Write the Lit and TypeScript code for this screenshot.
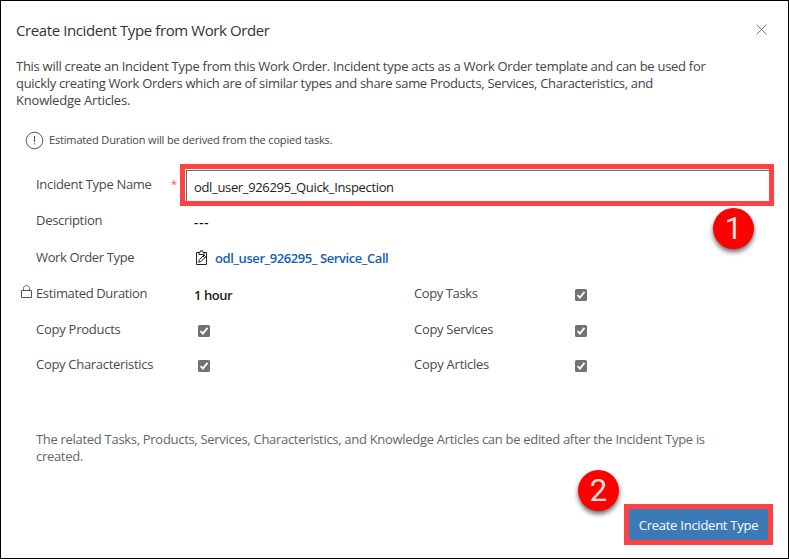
import { LitElement, html, css } from "lit";
import { customElement, property } from "lit/decorators.js";

@customElement("check-box")
class CheckBox extends LitElement {
  static styles = css`
    :host { display: block; width: 12px; height: 12px; }
    svg { display: block; }
  `;
  render() {
    return html`<svg width="12" height="12" viewBox="0 0 12 12">
      <rect width="12" height="12" rx="1.5" fill="#727272" />
      <path d="M2.5 6.2 L4.9 8.6 L9.5 2.9" fill="none" stroke="#fff" stroke-width="1.8" />
    </svg>`;
  }
}

@customElement("step-badge")
class StepBadge extends LitElement {
  @property() n = "";
  static styles = css`
    :host {
      display: block; width: 41px; height: 41px; border-radius: 50%;
      background: #fe0000; color: #e0e0e0; text-align: center;
      font: 31px/42px Roboto, Arial, sans-serif;
      box-shadow: 0 3px 5px rgba(0, 0, 0, 0.6);
    }
  `;
  render() {
    return html`${this.n}`;
  }
}

@customElement("app-root")
class AppRoot extends LitElement {
  static styles = css`
    :host {
      display: block; box-sizing: border-box; width: 789px; height: 559px;
      position: relative; overflow: hidden; border: 1px solid #000; background: #fff;
      font: 13px/20px "Open Sans", "Noto Sans", sans-serif; color: #4a4a4a;
      white-space: nowrap;
    }
    svg { display: block; }
    .head { display: flex; justify-content: space-between; padding: 19px 21px 0 15px; height: 22px; }
    .title { font-size: 15px; line-height: 21px; color: #333; letter-spacing: -0.4px; }
    .close { padding-top: 4px; }
    .intro { margin: 16px 0 0 15px; line-height: 17px; color: #444; letter-spacing: -0.275px; }
    .i2 { letter-spacing: -0.317px; }
    .i3 { letter-spacing: -0.2px; }
    .note { display: flex; gap: 5px; align-items: center; margin: 21px 0 0 24px; height: 20px; font-size: 11px; color: #444; letter-spacing: -0.17px; }
    .form { display: grid; grid-template-columns: 158px 220px 157px 1fr; grid-template-rows: 36px 37px 36px 36px 35px 40px; margin: 24px 14px 0 35px; }
    .wide { grid-column: 2 / -1; }
    .label { letter-spacing: -0.3px; display: flex; position: relative; height: 20px; }
    .l3, .l4 { letter-spacing: -0.36px; }
    .l5 { letter-spacing: -0.4px; }
    .l6, .l9 { letter-spacing: -0.25px; }
    .lock { position: absolute; left: -15px; top: 2px; }
    .star { position: absolute; left: 135px; top: 0; color: #f04a45; font-size: 11px; }
    .field { box-sizing: border-box; height: 42px; margin: -10px 0 0 -14px; border: 5px solid #ff4343; padding: 1px 0 0 1px; }
    .input { height: 31px; box-sizing: border-box; border: solid #666; border-width: 1px 0 0 1px; padding: 6px 0 0 7px; color: #222; letter-spacing: -0.34px; }
    .strong { font-weight: 600; color: #222; padding-top: 2px; letter-spacing: -0.45px; }
    .link { display: flex; gap: 8px; color: #1160b7; font-weight: 600; padding-top: 1px; letter-spacing: -0.41px; }
    .clip { padding: 1px 0 0 1px; margin-right: -1px; }
    .dash { padding-top: 2px; color: #000; font-weight: 600; letter-spacing: 1px; }
    .check { padding: 6px 0 0 4px; }
    .foot { margin: 37px 0 0 35px; line-height: 17px; color: #666; letter-spacing: -0.3px; }
    .actions { display: flex; justify-content: flex-end; margin: 39px 15px 0 0; }
    .button { box-sizing: border-box; width: 149px; height: 41px; border: 5px solid #ff4343; background: #3b79b7; color: #fff; line-height: 32px; text-align: center; letter-spacing: -0.25px; }
    .one, .two { position: absolute; }
    .one { left: 712px; top: 207px; }
    .two { left: 577px; top: 469px; }
  `;
  render() {
    return html`
      <div class="head">
        <span class="title">Create Incident Type from Work Order</span>
        <span class="close"><svg width="11" height="11" viewBox="0 0 11 11"><path d="M0.5 0.5 L10.5 10.5 M10.5 0.5 L0.5 10.5" stroke="#777" fill="none" /></svg></span>
      </div>
      <div class="intro">
        <span class="i1">This will create an Incident Type from this Work Order. Incident type acts as a Work Order template and can be used for</span><br />
        <span class="i2">quickly creating Work Orders which are of similar types and share same Products, Services, Characteristics, and</span><br />
        <span class="i3">Knowledge Articles.</span>
      </div>
      <div class="note">
        <svg width="19" height="19" viewBox="0 0 19 19"><circle cx="9.5" cy="9.5" r="8.3" fill="none" stroke="#555" /><path d="M9.5 5 V11 M9.5 12.2 V13.5" stroke="#555" stroke-width="1.1" /></svg>
        <span>Estimated Duration will be derived from the copied tasks.</span>
      </div>
      <div class="form">
        <div class="label"><span class="l1">Incident Type Name</span><span class="star">*</span></div>
        <div class="wide field"><div class="input">odl_user_926295_Quick_Inspection</div></div>

        <div class="label"><span class="l2">Description</span></div>
        <div class="wide dash">---</div>

        <div class="label"><span class="l3">Work Order Type</span></div>
        <div class="wide link">
          <svg class="clip" width="13" height="17" viewBox="0 0 13 17" fill="none" stroke="#222">
            <path d="M4 3.5 H1.5 V15.5 H11.5 V3.5 H9" />
            <path d="M4 5.5 V3.5 H5 L5.5 1.8 H7.5 L8 3.5 H9 V5.5 Z" />
            <path d="M3.6 13.2 L4.2 10.8 L9 6 L10.8 7.8 L6 12.6 Z M8 7 L9.8 8.8" />
          </svg>
          <span>odl_user_926295_ Service_Call</span>
        </div>

        <div class="label">
          <span class="lock"><svg width="11" height="13" viewBox="0 0 11 13" fill="none" stroke="#555"><path d="M0.5 5.5 H10.5 V12.5 H0.5 Z M2.5 5.5 V3.5 C2.5 -0.4 8.5 -0.4 8.5 3.5 V5.5" /></svg></span>
          <span class="l4">Estimated Duration</span>
        </div>
        <div class="strong">1 hour</div>
        <div class="label"><span class="l5">Copy Tasks</span></div>
        <div class="check"><check-box></check-box></div>

        <div class="label"><span class="l6">Copy Products</span></div>
        <div class="check"><check-box></check-box></div>
        <div class="label"><span class="l7">Copy Services</span></div>
        <div class="check"><check-box></check-box></div>

        <div class="label"><span class="l8">Copy Characteristics</span></div>
        <div class="check"><check-box></check-box></div>
        <div class="label"><span class="l9">Copy Articles</span></div>
        <div class="check"><check-box></check-box></div>
      </div>
      <div class="foot">
        The related Tasks, Products, Services, Characteristics, and Knowledge Articles can be edited after the Incident Type is<br />created.
      </div>
      <div class="actions"><div class="button">Create Incident Type</div></div>
      <step-badge class="one" n="1"></step-badge>
      <step-badge class="two" n="2"></step-badge>
    `;
  }
}
